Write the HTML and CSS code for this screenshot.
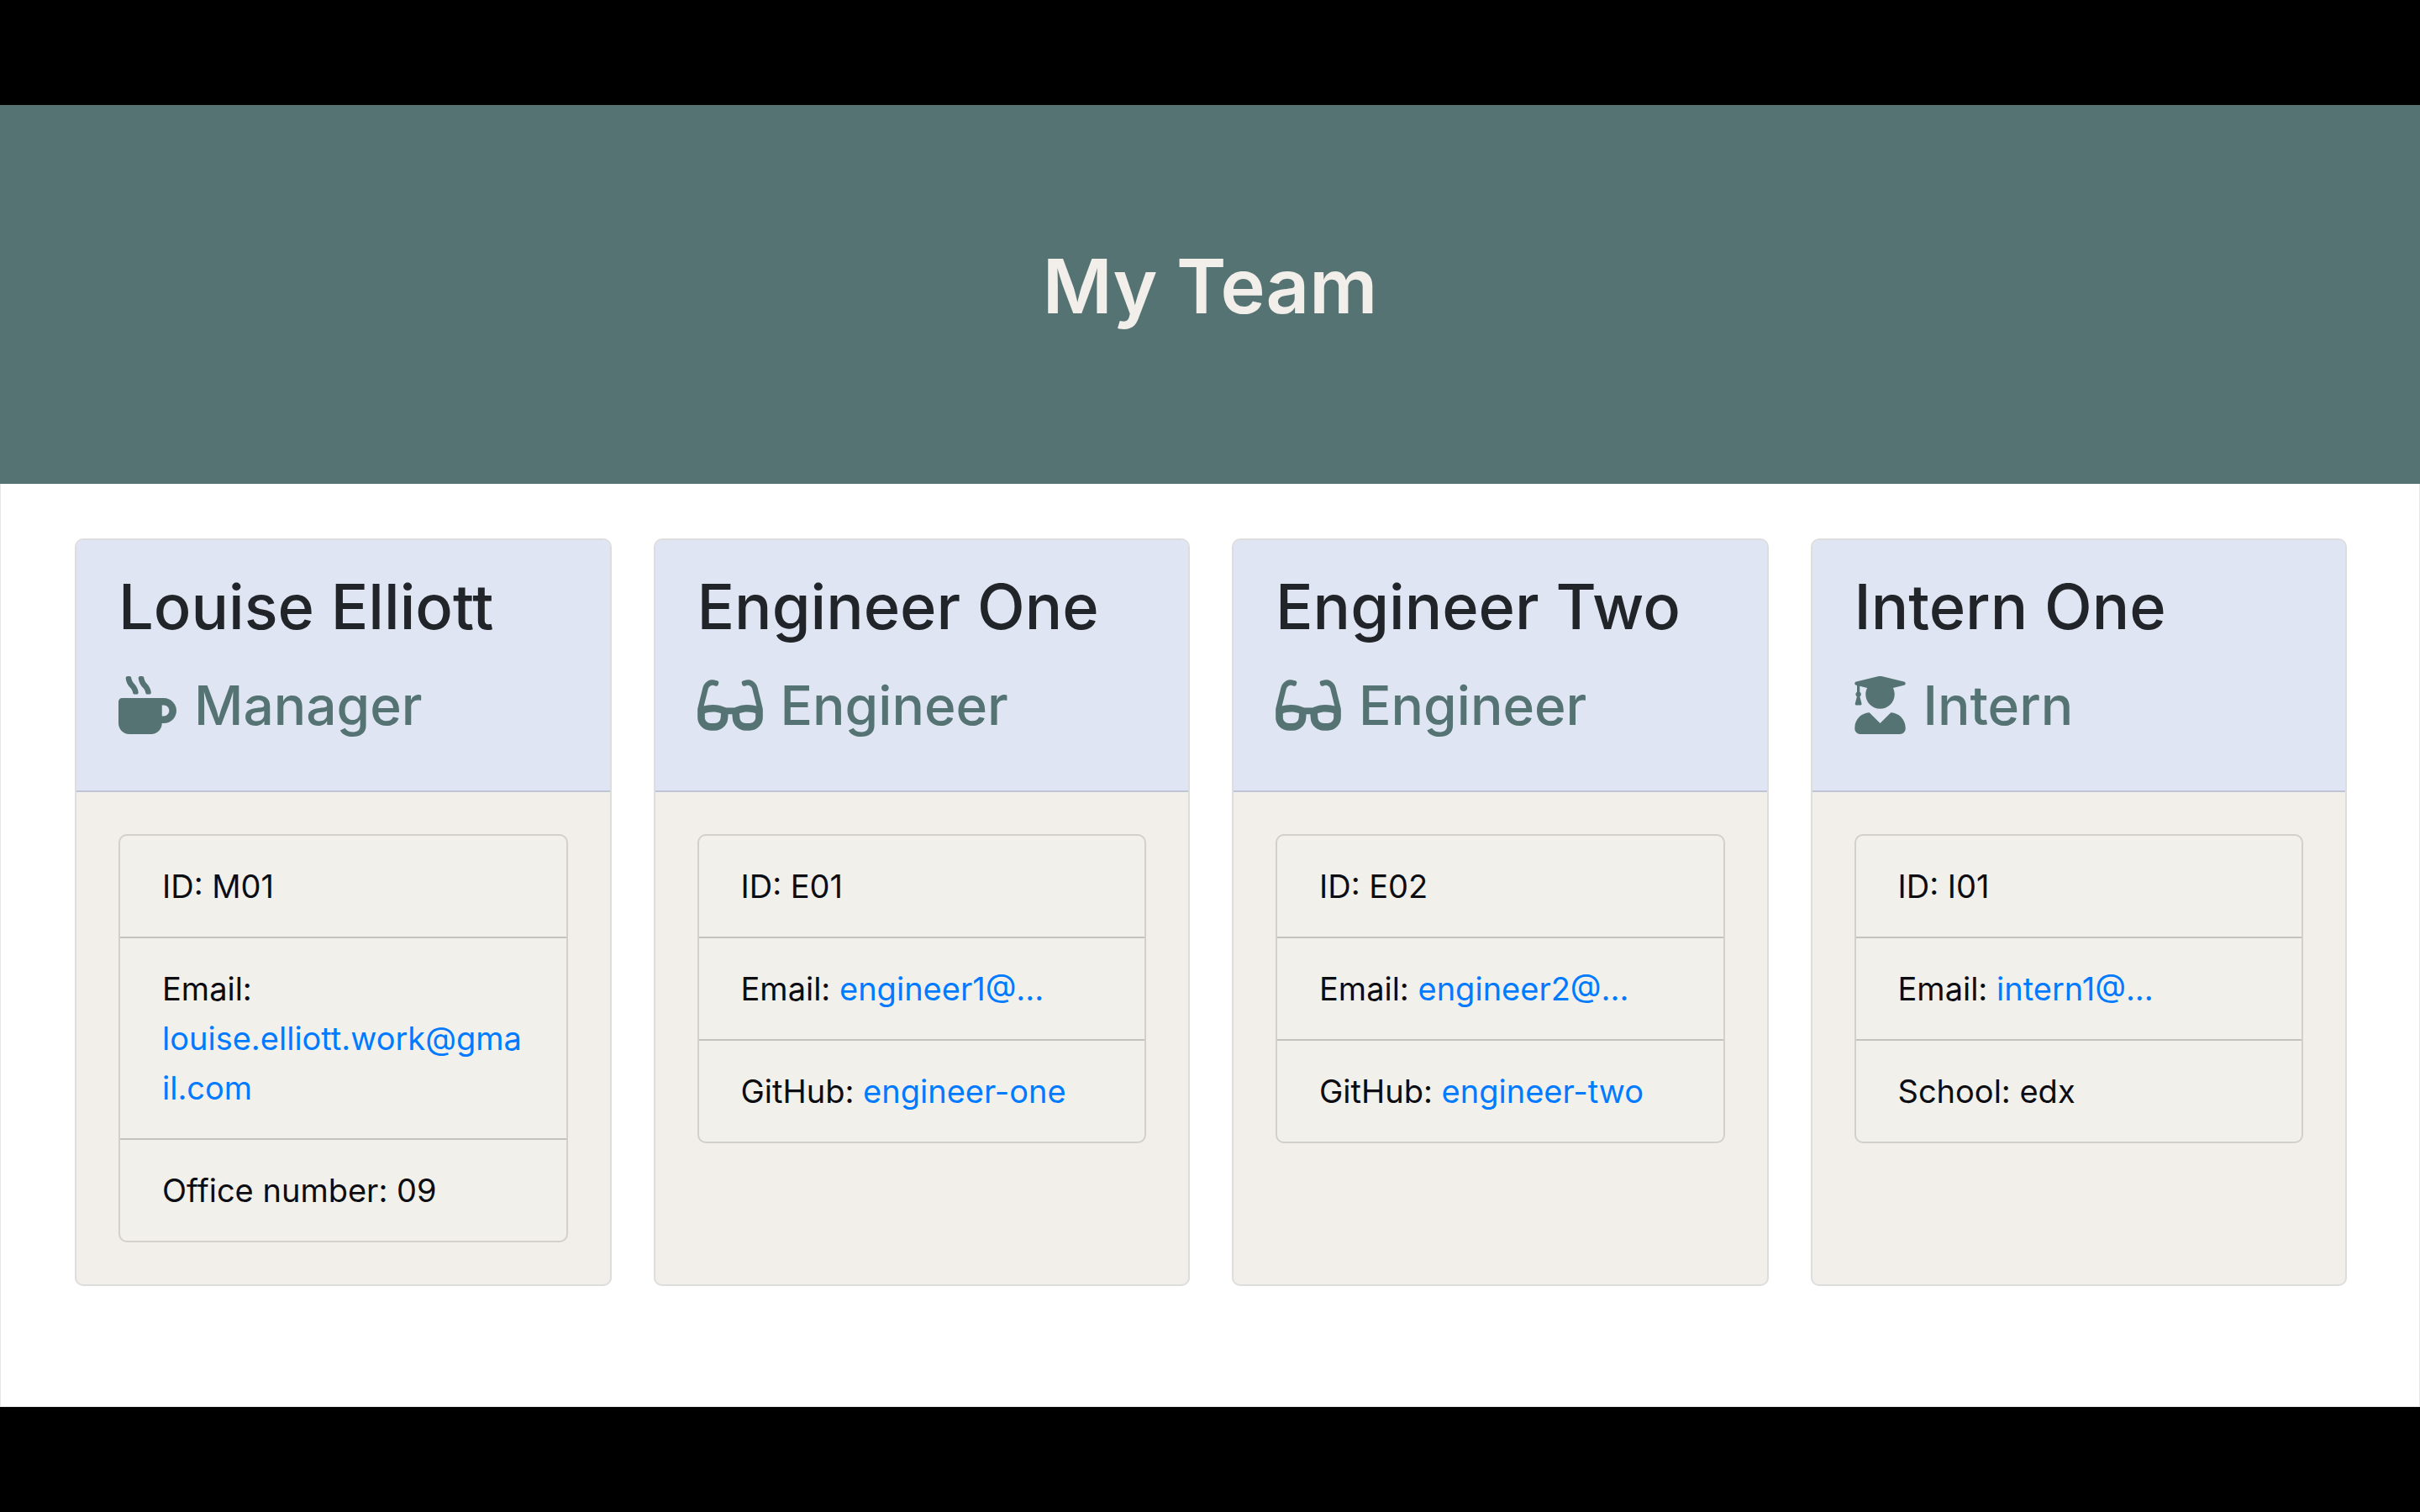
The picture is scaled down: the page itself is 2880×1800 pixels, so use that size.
FILE: index.html
```html
<!DOCTYPE html>
<html lang="en">
<head>
<meta charset="utf-8">
<title>My Team</title>
<link rel="stylesheet" href="styles.css">
</head>
<body>
<svg class="sprite" aria-hidden="true">
  <symbol id="mug" viewBox="0 0 512 512"><path d="M127.1 146.5c1.3 7.7 8 13.5 16 13.5h16.5c9.8 0 17.6-8.5 16.3-18-3.8-28.2-16.4-54.2-36.6-74.7-14.4-14.7-23.6-33.3-26.4-53.5C111.8 5.9 105 0 96.8 0H80.4C70.6 0 63 8.5 64.1 18c3.9 31.9 18 61.3 40.6 84.4 12 12.2 19.7 27.5 22.4 44.1zm112 0c1.3 7.7 8 13.5 16 13.5h16.5c9.8 0 17.6-8.5 16.3-18-3.8-28.2-16.4-54.2-36.6-74.7-14.4-14.7-23.6-33.3-26.4-53.5C223.8 5.9 217 0 208.8 0h-16.4c-9.8 0-17.5 8.5-16.3 18 3.9 31.9 18 61.3 40.6 84.4 12 12.2 19.7 27.5 22.4 44.1zM400 192H32c-17.7 0-32 14.3-32 32v192c0 53 43 96 96 96h192c53 0 96-43 96-96h16c61.8 0 112-50.2 112-112s-50.2-112-112-112zm0 160h-16v-96h16c26.5 0 48 21.5 48 48s-21.5 48-48 48z"/></symbol>
  <symbol id="glasses" viewBox="0 0 576 512"><path d="M574.1 280.37L528.75 98.66c-5.91-23.7-21.59-44.05-43-55.81-21.44-11.73-46.97-14.11-70.19-6.33l-15.25 5.08c-8.39 2.79-12.92 11.86-10.12 20.24l5.06 15.18c2.79 8.38 11.85 12.91 20.23 10.12l13.18-4.39c10.87-3.62 23-3.57 33.16 1.73 10.29 5.37 17.57 14.56 20.37 25.82l38.46 153.82c-22.19-6.81-49.79-12.46-81.2-12.46-34.77 0-73.98 7.02-114.85 26.74h-73.18c-40.87-19.74-80.08-26.75-114.86-26.75-31.42 0-59.02 5.65-81.21 12.46l38.46-153.83c2.79-11.25 10.09-20.45 20.38-25.81 10.16-5.3 22.28-5.35 33.15-1.73l13.17 4.39c8.38 2.79 17.44-1.74 20.23-10.12l5.06-15.18c2.8-8.38-1.73-17.45-10.12-20.24l-15.25-5.08c-23.22-7.78-48.75-5.41-70.19 6.33-21.41 11.77-37.09 32.11-43 55.8L1.9 280.37A64.218 64.218 0 0 0 0 295.86v70.25C0 429.01 51.58 480 115.2 480h37.12c60.28 0 110.37-45.94 114.88-105.37l2.93-38.63h35.75l2.93 38.63C313.31 434.06 363.4 480 423.68 480h37.12c63.62 0 115.2-50.99 115.2-113.88v-70.25c0-5.23-.64-10.43-1.9-15.5zm-370.72 89.42c-1.97 25.91-24.4 46.21-51.06 46.21H115.2C86.97 416 64 393.62 64 366.11v-37.54c18.12-6.49 43.42-12.92 72.58-12.92 23.86 0 47.26 4.33 69.93 12.92l-3.13 41.22zM512 366.12c0 27.51-22.97 49.88-51.2 49.88h-37.12c-26.67 0-49.1-20.3-51.06-46.21l-3.13-41.22c22.67-8.59 46.08-12.92 69.95-12.92 29.17 0 54.46 6.43 72.58 12.92v37.55z"/></symbol>
  <symbol id="graduate" viewBox="0 0 448 512"><path d="M319.4 320.6L224 416l-95.4-95.4C57.1 323.7 0 382.2 0 454.4v9.6c0 26.5 21.5 48 48 48h352c26.5 0 48-21.5 48-48v-9.6c0-72.2-57.1-130.7-128.6-133.8zM13.6 79.8l6.4 1.5v58.4c-7 4.2-12 11.5-12 20.3 0 8.4 4.6 15.4 11.1 19.7L3.5 242c-1.7 6.9 2.1 14 7.6 14h41.8c5.5 0 9.3-7.1 7.6-14l-15.6-62.3C51.4 175.4 56 168.4 56 160c0-8.8-5-16.1-12-20.3V87.1l66 15.9c-8.6 17.2-14 36.4-14 57 0 70.7 57.3 128 128 128s128-57.3 128-128c0-20.6-5.3-39.8-14-57l96.3-23.2c18.2-4.4 18.2-27.1 0-31.5l-190.4-46c-13-3.1-26.7-3.1-39.7 0L13.6 48.2c-18.1 4.4-18.1 27.2 0 31.6z"/></symbol>
</svg>
<div class="page">
  <header class="banner"><h1 class="banner-title">My Team</h1></header>
  <main class="team">
    <article class="card">
      <div class="card-header">
        <h2 class="name">Louise Elliott</h2>
        <h3 class="role"><svg class="icon icon-mug" aria-hidden="true"><use href="#mug"/></svg>Manager</h3>
      </div>
      <div class="card-body">
        <ul class="details">
          <li class="detail">ID: M01</li>
          <li class="detail">Email: <a class="link link-block" href="mailto:louise.elliott.work@gmail.com">louise.elliott.work@gmail.com</a></li>
          <li class="detail">Office number: 09</li>
        </ul>
      </div>
    </article>
    <article class="card">
      <div class="card-header">
        <h2 class="name">Engineer One</h2>
        <h3 class="role"><svg class="icon icon-glasses" aria-hidden="true"><use href="#glasses"/></svg>Engineer</h3>
      </div>
      <div class="card-body">
        <ul class="details">
          <li class="detail">ID: E01</li>
          <li class="detail">Email: <a class="link" href="mailto:engineer1@...">engineer1@...</a></li>
          <li class="detail">GitHub: <a class="link" href="https://github.com/engineer-one">engineer-one</a></li>
        </ul>
      </div>
    </article>
    <article class="card">
      <div class="card-header">
        <h2 class="name">Engineer Two</h2>
        <h3 class="role"><svg class="icon icon-glasses" aria-hidden="true"><use href="#glasses"/></svg>Engineer</h3>
      </div>
      <div class="card-body">
        <ul class="details">
          <li class="detail">ID: E02</li>
          <li class="detail">Email: <a class="link" href="mailto:engineer2@...">engineer2@...</a></li>
          <li class="detail">GitHub: <a class="link" href="https://github.com/engineer-two">engineer-two</a></li>
        </ul>
      </div>
    </article>
    <article class="card">
      <div class="card-header">
        <h2 class="name">Intern One</h2>
        <h3 class="role"><svg class="icon icon-graduate" aria-hidden="true"><use href="#graduate"/></svg>Intern</h3>
      </div>
      <div class="card-body">
        <ul class="details">
          <li class="detail">ID: I01</li>
          <li class="detail">Email: <a class="link" href="mailto:intern1@...">intern1@...</a></li>
          <li class="detail">School: edx</li>
        </ul>
      </div>
    </article>
  </main>
</div>
</body>
</html>
```
FILE: styles.css
```css
* { box-sizing: border-box; }

body {
  margin: 0;
  padding: 125px 0;
  background: #000;
  color: #212529;
  font-family: Inter, "Liberation Sans", sans-serif;
  font-size: 38px;
  line-height: 59px;
}

h1, h2, h3, ul { margin: 0; padding: 0; font-weight: 500; }

.sprite { display: none; }

.page { background: #fff; }

.banner {
  padding: 157px 52px 176px;
  background: #557372;
  color: #f2eee9;
  text-align: center;
}

.banner-title { font-size: 90px; line-height: 118px; font-weight: 600; }

.team {
  display: grid;
  grid-template-columns: repeat(4, minmax(0, 1fr));
  gap: 50px;
  padding: 65px 86px 143px 88px;
  border: 1px solid #e8e8e8;
  border-top: 0;
}

.card {
  overflow: hidden;
  border: 2px solid #dedddd;
  border-radius: 10px;
  background: #f2eee9;
}

.card-header {
  padding: 30px 50px 58px;
  border-bottom: 2px solid #bfc5d6;
  background: #dfe5f3;
}

.name { font-size: 74px; line-height: 98px; }

.role {
  display: flex;
  align-items: center;
  gap: 21px;
  margin-top: 26px;
  color: #557372;
  font-size: 64px;
  line-height: 86px;
}

.icon { flex: none; height: 69px; margin-bottom: 2px; fill: currentColor; }
.icon-mug { width: 69px; }
.icon-glasses { width: 78px; }
.icon-graduate { width: 61px; }

.card-body { padding: 50px; }

.details {
  border: 2px solid #d1d0cc;
  border-radius: 10px;
  background: #f2f0eb;
  font-weight: 400;
  list-style: none;
}

.detail { padding: 31px 50px 30px; color: #0b0d12; overflow-wrap: anywhere; }
.detail + .detail { border-top: 2px solid #c4c3bf; }

.link { color: #007bff; text-decoration: none; }
.link-block { display: block; }
```
